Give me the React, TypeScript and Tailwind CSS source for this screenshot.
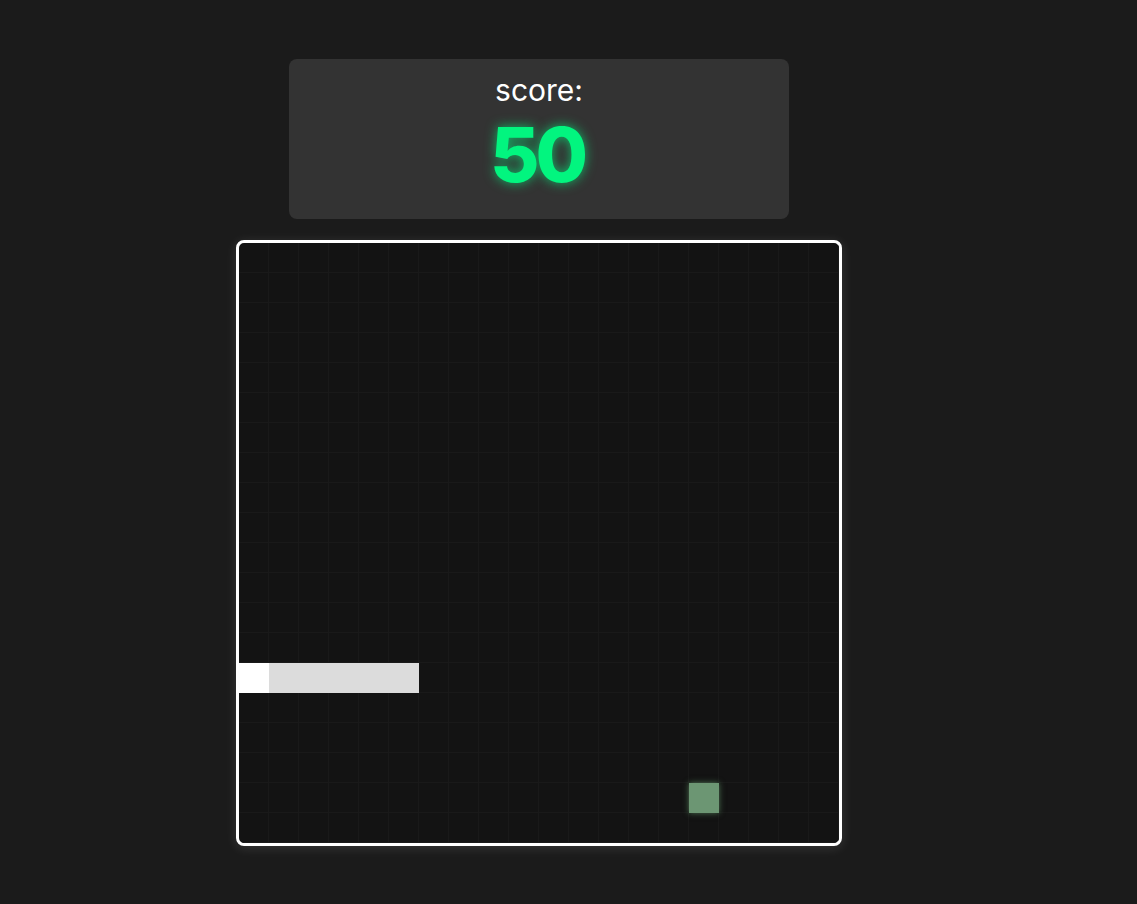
const SIZE = 20;

// head first
const snake = [
  { x: 0, y: 14 },
  { x: 1, y: 14 },
  { x: 2, y: 14 },
  { x: 3, y: 14 },
  { x: 4, y: 14 },
  { x: 5, y: 14 },
];
const food = { x: 15, y: 18 };

const Cell = ({ x, y }: { x: number; y: number }) => {
  const idx = snake.findIndex(s => s.x === x && s.y === y);
  if (idx === 0) return <div className="w-[30px] h-[30px] bg-white" />;
  if (idx > 0) return <div className="w-[30px] h-[30px] bg-[#dcdcdc]" />;
  if (food.x === x && food.y === y)
    return (
      <div className="w-[30px] h-[30px] bg-[#6c9673] shadow-[0_0_6px_rgba(120,190,130,0.55)] relative z-10" />
    );
  return <div className="w-[30px] h-[30px] border-r border-b border-[#191919]" />;
};

export default function App() {
  return (
    <div className="min-h-screen bg-[#1b1b1b] font-['Inter',sans-serif]">
      <div className="w-[1078px] flex flex-col items-center pt-[59px]">
        {/* score */}
        <div className="w-[500px] h-[160px] rounded-lg bg-[#333333] flex flex-col items-center pt-[13px]">
          <p className="text-[30px] leading-[36px] text-white">score:</p>
          <p className="mt-[8px] text-[76px] leading-none font-extrabold text-[#02f57f] tracking-[-4px] pr-[4px] [text-shadow:0_0_12px_rgba(2,245,127,0.7)]">
            50
          </p>
        </div>

        {/* board */}
        <div className="mt-[21px] w-[606px] h-[606px] border-[3px] border-white rounded-[8px] bg-[#131313] overflow-hidden shadow-[0_2px_12px_rgba(255,255,255,0.12)]">
          <div className="grid grid-cols-[repeat(20,30px)]">
            {Array.from({ length: SIZE * SIZE }).map((_, i) => (
              <Cell key={i} x={i % SIZE} y={Math.floor(i / SIZE)} />
            ))}
          </div>
        </div>
      </div>
    </div>
  );
}
